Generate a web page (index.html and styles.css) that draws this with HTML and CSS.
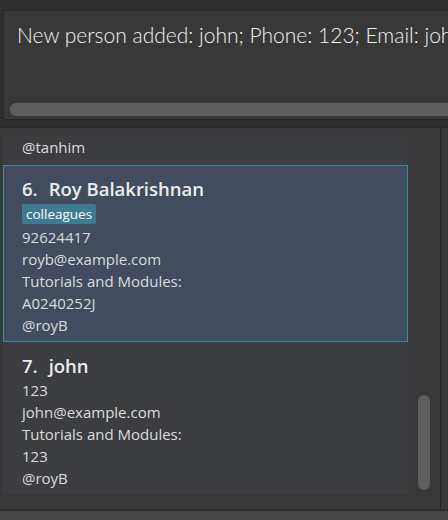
FILE: index.html
```html
<!DOCTYPE html>
<html>
<head>
<meta charset="utf-8">
<link rel="stylesheet" href="styles.css">
</head>
<body>
<div class="app">
  <div class="result-wrap">
    <div class="result">
      <div class="result-text">New person added: john; Phone: 123; Email: john@example.com; Tutorials and Modules: 123; Telegram: @royB</div>
      <div class="hscroll"></div>
    </div>
  </div>
  <div class="list-panel">
    <div class="list">
      <div class="card card-partial">
        <div class="line">@tanhim</div>
      </div>
      <div class="card card-selected">
        <div class="name"><span class="idx">6.</span>Roy Balakrishnan</div>
        <div class="tags"><span class="tag">colleagues</span></div>
        <div class="line">92624417</div>
        <div class="line">royb@example.com</div>
        <div class="line">Tutorials and Modules:</div>
        <div class="line">A0240252J</div>
        <div class="line">@royB</div>
      </div>
      <div class="card card-last">
        <div class="name"><span class="idx">7.</span>john</div>
        <div class="line">123</div>
        <div class="line">john@example.com</div>
        <div class="line">Tutorials and Modules:</div>
        <div class="line">123</div>
        <div class="line">@royB</div>
      </div>
    </div>
    <div class="vscroll-track">
      <div class="vscroll-thumb"></div>
    </div>
    <div class="panel-edge"></div>
  </div>
  <div class="status"></div>
</div>
</body>
</html>
```

FILE: styles.css
```css
html, body {
  margin: 0;
  padding: 0;
}
body {
  background: #2f2f2f;
  width: 448px;
  height: 520px;
  overflow: hidden;
  font-family: "Open Sans", "Noto Sans", sans-serif;
}
.app {
  display: flex;
  flex-direction: column;
  height: 520px;
}
.result-wrap {
  padding: 10px 0 0 3px;
  height: 118px;
  box-sizing: border-box;
  border-bottom: 1px solid #262626;
  background: #2f2f2f;
}
.result {
  width: 460px;
  height: 110px;
  box-sizing: border-box;
  border: 1px solid #262626;
  background: #383838;
  display: flex;
  flex-direction: column;
  padding: 9px 0 3px 6px;
}
.result-text {
  font-family: "Lato", sans-serif;
  font-weight: 300;
  font-size: 21px;
  color: #f2f2f2;
  white-space: nowrap;
  overflow: hidden;
  padding-left: 7px;
  line-height: 30px;
}
.hscroll {
  margin-top: auto;
  height: 13px;
  border-radius: 6px;
  background: #5e5e5e;
}
.list-panel {
  margin-top: 9px;
  height: 381px;
  background: #383838;
  display: flex;
  border-top: 1px solid #2a2a2a;
}
.list {
  width: 405px;
  margin-left: 3px;
  display: flex;
  flex-direction: column;
  overflow: hidden;
  height: 359px;
  margin-top: 8px;
}
.card {
  background: #3c3d40;
  padding: 10px 0 5px 19px;
  color: #dcdcdc;
  font-size: 15px;
}
.card-partial {
  padding-top: 0;
  padding-bottom: 7px;
}
.card-selected {
  background: #424c5e;
  border: 1px solid #3b8ba0;
  padding: 10px 0 5px 18px;
}
.card-last {
  padding-top: 11px;
}
.name {
  font-size: 18.5px;
  font-weight: 600;
  color: #ececec;
  line-height: 26px;
}
.card-last .name {
  line-height: 26px;
}
.idx {
  margin-right: 11px;
}
.line {
  line-height: 22px;
}
.tags {
  display: flex;
  margin: 2px 0 2px 0;
}
.tag {
  background: #3e7b91;
  color: #ffffff;
  font-size: 13.5px;
  line-height: 20px;
  height: 20px;
  padding: 0 4px;
  border-radius: 2px;
}
.vscroll-track {
  width: 32px;
  display: flex;
  flex-direction: column;
  align-items: center;
  padding-top: 267px;
  box-sizing: border-box;
}
.vscroll-thumb {
  width: 12px;
  height: 95px;
  border-radius: 6px;
  background: #5e5e5e;
}
.panel-edge {
  width: 1px;
  background: #262626;
}
.status {
  flex: 1;
  background: #454545;
  border-top: 1px solid #2a2a2a;
  margin-top: 1px;
}
```
